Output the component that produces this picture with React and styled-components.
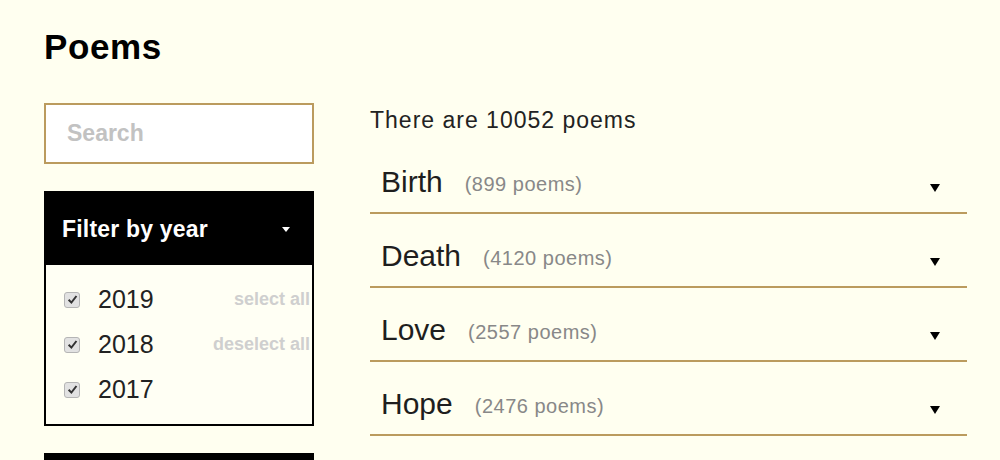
import React from "react";
import styled, { createGlobalStyle } from "styled-components";

const GlobalStyle = createGlobalStyle`
  html, body {
    margin: 0;
    background: #fffff0;
  }
  body {
    font-family: "Liberation Sans", Arial, sans-serif;
    color: #1e1e1e;
  }
`;

const years = [2019, 2018, 2017];

const topics = [
  { name: "Birth", count: 899 },
  { name: "Death", count: 4120 },
  { name: "Love", count: 2557 },
  { name: "Hope", count: 2476 },
];

const Page = styled.div`
  padding: 26px 0 0 44px;
  width: 1000px;
  height: 460px;
  box-sizing: border-box;
  overflow: hidden;
`;

const Title = styled.h1`
  margin: 0;
  font-size: 35px;
  font-weight: bold;
  letter-spacing: 0.6px;
  color: #000;
  line-height: 42px;
`;

const Columns = styled.div`
  display: flex;
  gap: 56px;
  margin-top: 35px;
`;

const Sidebar = styled.div`
  width: 270px;
  display: flex;
  flex-direction: column;
  gap: 27px;
`;

const SearchInput = styled.input`
  width: 270px;
  height: 61px;
  box-sizing: border-box;
  border: 2px solid #bb9b5e;
  background: #fff;
  padding: 0 21px;
  font-family: "Liberation Sans", Arial, sans-serif;
  font-size: 23px;
  font-weight: bold;
  outline: none;
  &::placeholder {
    color: #c2c2c2;
  }
`;

const FilterBox = styled.div`
  border: 2px solid #000;
  background: #fffff4;
`;

const FilterHead = styled.div`
  background: #000;
  color: #fff;
  height: 72px;
  display: flex;
  align-items: center;
  justify-content: space-between;
  padding: 0 22px 0 16px;
  font-size: 23px;
  font-weight: bold;
  letter-spacing: 0.2px;
`;

const Caret = styled.span`
  width: 0;
  height: 0;
  border-left: 4px solid transparent;
  border-right: 4px solid transparent;
  border-top: 5px solid ${(p) => p.color || "#000"};
`;

const FilterBody = styled.div`
  display: grid;
  grid-template-columns: 1fr auto;
  padding: 12px 2px 12px 18px;
`;

const YearList = styled.div`
  display: flex;
  flex-direction: column;
`;

const YearRow = styled.label`
  display: flex;
  align-items: center;
  gap: 18px;
  height: 45px;
  font-size: 25px;
  color: #222;
`;

const Check = styled.span`
  width: 16px;
  height: 16px;
  box-sizing: border-box;
  border: 1px solid #b5b5b5;
  border-radius: 3px;
  background: #e2e2e2;
  display: flex;
  align-items: center;
  justify-content: center;
`;

const Actions = styled.div`
  display: flex;
  flex-direction: column;
  align-items: flex-end;
`;

const ActionLink = styled.span`
  height: 45px;
  display: flex;
  align-items: center;
  font-size: 18px;
  font-weight: bold;
  color: #cfcfcf;
`;

const NextBox = styled.div`
  height: 40px;
  background: #000;
`;

const Main = styled.div`
  width: 597px;
  padding-top: 4px;
`;

const Count = styled.div`
  font-size: 23px;
  letter-spacing: 1px;
  color: #222;
  line-height: 26px;
`;

const FirstGap = styled.div`
  height: 7px;
`;

const Topic = styled.div`
  height: 74px;
  box-sizing: border-box;
  border-bottom: 2px solid #bb9b5e;
  display: flex;
  align-items: flex-end;
  padding: 0 27px 13px 11px;
`;

const TopicName = styled.span`
  font-size: 30px;
  color: #1e1e1e;
  line-height: 34px;
`;

const TopicCount = styled.span`
  font-size: 20px;
  letter-spacing: 0.5px;
  color: #888;
  margin-left: 22px;
  line-height: 30px;
  flex: 1;
`;

const Arrow = styled.span`
  width: 0;
  height: 0;
  margin-bottom: 7px;
  border-left: 5px solid transparent;
  border-right: 5px solid transparent;
  border-top: 8px solid #000;
`;

const CheckMark = () => (
  <svg width="11" height="11" viewBox="0 0 10 10">
    <path d="M1.5 5.2 L4 7.8 L8.6 1.8" fill="none" stroke="#333" strokeWidth="1.8" />
  </svg>
);

export default function App() {
  return (
    <Page>
      <GlobalStyle />
      <Title>Poems</Title>
      <Columns>
        <Sidebar>
          <SearchInput placeholder="Search" />
          <FilterBox>
            <FilterHead>
              Filter by year
              <Caret color="#fff" />
            </FilterHead>
            <FilterBody>
              <YearList>
                {years.map((y) => (
                  <YearRow key={y}>
                    <Check>
                      <CheckMark />
                    </Check>
                    {y}
                  </YearRow>
                ))}
              </YearList>
              <Actions>
                <ActionLink>select all</ActionLink>
                <ActionLink>deselect all</ActionLink>
              </Actions>
            </FilterBody>
          </FilterBox>
          <NextBox />
        </Sidebar>
        <Main>
          <Count>There are 10052 poems</Count>
          <FirstGap />
          {topics.map((t) => (
            <Topic key={t.name}>
              <TopicName>{t.name}</TopicName>
              <TopicCount>({t.count} poems)</TopicCount>
              <Arrow />
            </Topic>
          ))}
        </Main>
      </Columns>
    </Page>
  );
}
